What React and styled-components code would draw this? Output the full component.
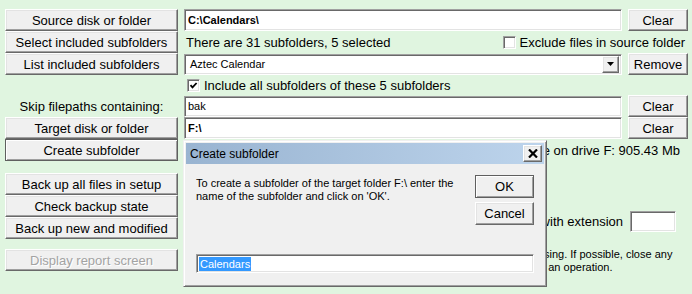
import styled, { createGlobalStyle, css } from "styled-components";

const GlobalStyle = createGlobalStyle`
  html, body {
    margin: 0;
    padding: 0;
  }
  body {
    background: #e0f5e0;
    font-family: "Liberation Sans", Arial, sans-serif;
  }
`;

const raised = css`
  border: 1px solid;
  border-color: #ffffff #696969 #696969 #ffffff;
  box-shadow: inset -1px -1px #a0a0a0, inset 1px 1px #e3e3e3;
`;

const sunken = css`
  border: 1px solid;
  border-color: #a0a0a0 #ffffff #ffffff #a0a0a0;
  box-shadow: inset 1px 1px #696969, inset -1px -1px #e3e3e3;
`;

const Page = styled.div`
  position: relative;
  box-sizing: border-box;
  width: 692px;
  height: 294px;
  padding: 9px 4px 0 5px;
  overflow: hidden;
  background: #e0f5e0;
`;

const Row = styled.div`
  display: grid;
  grid-template-columns: 173px 1fr 60px;
  column-gap: 6px;
  align-items: center;
  height: ${p => p.$h || 22}px;
`;

const Wide = styled.div`
  grid-column: 2 / 4;
  display: flex;
  align-items: center;
  justify-content: ${p => p.$end ? "flex-end" : "space-between"};
  padding: 0 ${p => p.$pr || 0}px 0 ${p => p.$pl || 0}px;
  font-size: 13px;
  color: #000;
  white-space: nowrap;
`;

const Button = styled.button`
  box-sizing: border-box;
  width: 100%;
  height: ${p => p.$h || 22}px;
  margin: 0;
  padding: 0;
  background: #f0f0f0;
  ${raised}
  font: 13px "Liberation Sans", Arial, sans-serif;
  color: #000;
  white-space: nowrap;

  ${p => p.$default && css`
    border-color: #5f5f5f;
    box-shadow: inset 1px 1px #ffffff, inset -1px -1px #a0a0a0;
  `}

  &:disabled {
    color: #a3a3a3;
    text-shadow: 1px 1px #ffffff;
  }
`;

const Label = styled.div`
  text-align: center;
  font-size: 13px;
  color: #000;
`;

const Field = styled.div`
  box-sizing: border-box;
  height: ${p => p.$h || 22}px;
  display: flex;
  align-items: center;
  padding-left: ${p => p.$pl || 3}px;
  background: #ffffff;
  ${sunken}
  font-size: 11px;
  font-weight: ${p => p.$bold ? 700 : 400};
  color: #000;
`;

const Combo = styled(Field)`
  justify-content: space-between;
  padding-right: 2px;
  padding-left: 5px;
`;

const DropButton = styled.span`
  box-sizing: border-box;
  width: 17px;
  height: 17px;
  display: flex;
  align-items: center;
  justify-content: center;
  background: #f0f0f0;
  ${raised}
`;

const CheckRow = styled.label`
  display: flex;
  align-items: center;
  gap: 4px;
  font-size: 13px;
  color: #000;
`;

const Box = styled.span`
  box-sizing: border-box;
  width: 13px;
  height: 13px;
  display: flex;
  align-items: center;
  justify-content: center;
  background: #ffffff;
  ${sunken}
`;

const Bottom = styled.div`
  display: grid;
  grid-template-columns: 173px 1fr;
  column-gap: 6px;
  margin-top: 12px;
`;

const ButtonStack = styled.div`
  display: flex;
  flex-direction: column;
`;

const StackGap = styled.div`
  height: 10px;
`;

const RightPanel = styled.div`
  padding-top: 38px;
  display: flex;
  flex-direction: column;
`;

const ExtRow = styled.div`
  display: flex;
  justify-content: flex-end;
  align-items: center;
  gap: 7px;
  padding-right: 12px;
  font-size: 13px;
  color: #000;
`;

const ExtField = styled(Field)`
  width: 46px;
  height: 21px;
`;

const Note = styled.div`
  margin-top: 16px;
  padding-left: 20px;
  font-size: 11px;
  line-height: 13px;
  color: #000;
  white-space: nowrap;
`;

/* dialog window over the form */
const Dialog = styled.div`
  position: absolute;
  left: 183px;
  top: 140px;
  box-sizing: border-box;
  width: 364px;
  height: 147px;
  display: flex;
  flex-direction: column;
  background: #f0f0f0;
  border: 1px solid;
  border-color: #f0f0f0 #696969 #696969 #f0f0f0;
  box-shadow: inset 1px 1px #ffffff, inset -1px -1px #a0a0a0;
  padding: 2px;
`;

const TitleBar = styled.div`
  height: 21px;
  display: flex;
  align-items: center;
  justify-content: space-between;
  padding: 0 2px 0 4px;
  background: linear-gradient(to right, #99b4d1, #bdd4ec);
  font-size: 12px;
  color: #000;
`;

const CloseButton = styled.span`
  box-sizing: border-box;
  width: 19px;
  height: 17px;
  display: flex;
  align-items: center;
  justify-content: center;
  background: #f0f0f0;
  ${raised}
`;

const DialogBody = styled.div`
  flex: 1;
  display: flex;
  flex-direction: column;
  padding: 11px 10px;
`;

const DialogTop = styled.div`
  display: flex;
  justify-content: space-between;
  align-items: flex-start;
`;

const Message = styled.p`
  margin: 2px 0 0;
  font-size: 11px;
  line-height: 13px;
  color: #000;
`;

const DialogButtons = styled.div`
  width: 59px;
  display: flex;
  flex-direction: column;
  gap: 4px;
`;

const NameField = styled(Field)`
  margin-top: auto;
  height: 19px;
  padding-left: 2px;
`;

const Selected = styled.span`
  background: #3399ff;
  color: #ffffff;
  padding: 1px;
`;

function Check({ checked }) {
  return (
    <Box>
      {checked && (
        <svg width="9" height="9" viewBox="0 0 9 9">
          <polyline points="1.5,4.2 3.5,6.4 7.6,2" fill="none" stroke="#000" strokeWidth="1.8" />
        </svg>
      )}
    </Box>
  );
}

export default function App() {
  return (
    <>
      <GlobalStyle />
      <Page>
        <Row>
          <Button>Source disk or folder</Button>
          <Field $bold>C:\Calendars\</Field>
          <Button>Clear</Button>
        </Row>
        <Row>
          <Button>Select included subfolders</Button>
          <Wide $pl={2} $pr={3}>
            <span>There are 31 subfolders, 5 selected</span>
            <CheckRow>
              <Check />
              Exclude files in source folder
            </CheckRow>
          </Wide>
        </Row>
        <Row>
          <Button>List included subfolders</Button>
          <Combo $h={21}>
            Aztec Calendar
            <DropButton>
              <svg width="7" height="4" viewBox="0 0 7 4">
                <polygon points="0,0 7,0 3.5,4" fill="#000" />
              </svg>
            </DropButton>
          </Combo>
          <Button>Remove</Button>
        </Row>
        <Row $h={20}>
          <div />
          <Wide $pl={3}>
            <CheckRow>
              <Check checked />
              Include all subfolders of these 5 subfolders
            </CheckRow>
          </Wide>
        </Row>
        <Row>
          <Label>Skip filepaths containing:</Label>
          <Field $h={21}>bak</Field>
          <Button>Clear</Button>
        </Row>
        <Row>
          <Button>Target disk or folder</Button>
          <Field $bold>F:\</Field>
          <Button>Clear</Button>
        </Row>
        <Row>
          <Button $default>Create subfolder</Button>
          <Wide $end $pr={8}>Free space on drive F: 905.43 Mb</Wide>
        </Row>

        <Bottom>
          <ButtonStack>
            <Button>Back up all files in setup</Button>
            <Button>Check backup state</Button>
            <Button>Back up new and modified</Button>
            <StackGap />
            <Button disabled>Display report screen</Button>
          </ButtonStack>
          <RightPanel>
            <ExtRow>
              <span>Back up only files with extension</span>
              <ExtField />
            </ExtRow>
            <Note>
              Files that are open in other programs can not be copied during processing. If possible, close any
              <br />
              other programs and open windows, before you start a backup, or such an operation.
            </Note>
          </RightPanel>
        </Bottom>

        <Dialog>
          <TitleBar>
            <span>Create subfolder</span>
            <CloseButton>
              <svg width="10" height="9" viewBox="0 0 10 9">
                <path d="M1 0.5 L9 8.5 M9 0.5 L1 8.5" stroke="#000" strokeWidth="2.2" />
              </svg>
            </CloseButton>
          </TitleBar>
          <DialogBody>
            <DialogTop>
              <Message>
                To create a subfolder of the target folder F:\ enter the
                <br />
                name of the subfolder and click on 'OK'.
              </Message>
              <DialogButtons>
                <Button $default $h={23}>OK</Button>
                <Button $h={23}>Cancel</Button>
              </DialogButtons>
            </DialogTop>
            <NameField>
              <Selected>Calendars</Selected>
            </NameField>
          </DialogBody>
        </Dialog>
      </Page>
    </>
  );
}
